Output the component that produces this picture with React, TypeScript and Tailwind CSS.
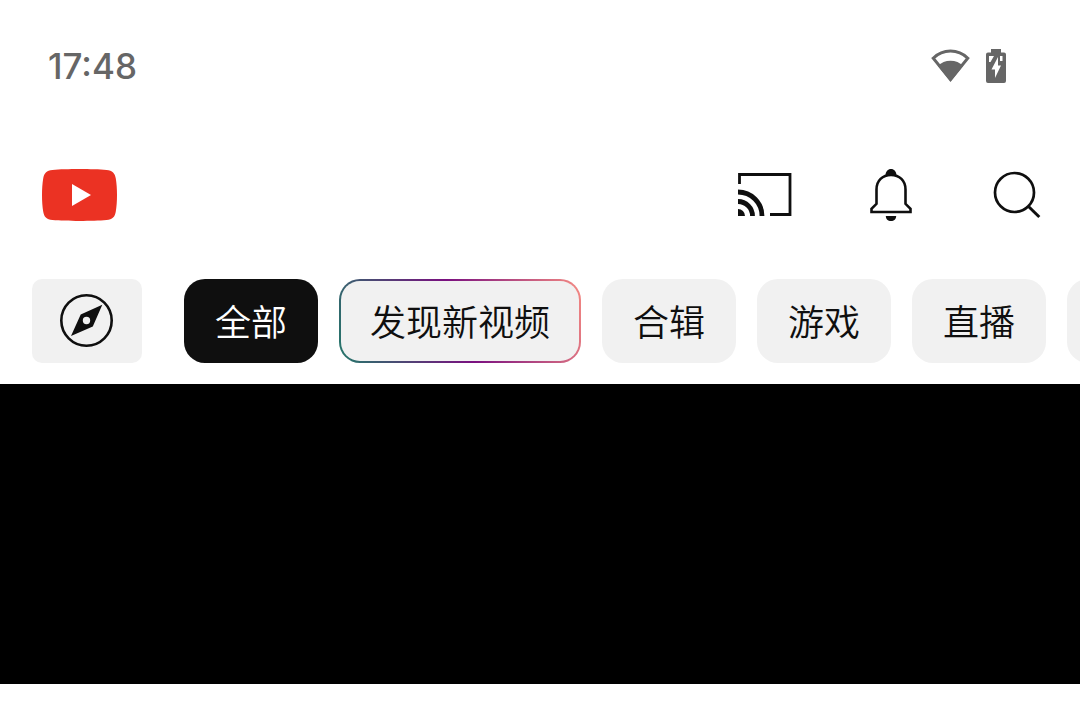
import React, { useState } from "react";

const topics = ["全部", "发现新视频", "合辑", "游戏", "直播"];

function WifiIcon() {
  return (
    <svg className="h-9 w-10" viewBox="0 0 40 36" fill="none" aria-hidden="true">
      <path d="M3.2 10.2C13 0.6 28 0.6 37.8 10.2L20.5 31.5Z" stroke="#666" strokeWidth="3" />
      <path d="M8 18C14 11 27 11 33 18L20.5 33.5Z" fill="#666" />
    </svg>
  );
}

function BatteryIcon() {
  return (
    <svg className="h-9 w-5" viewBox="0 0 20 36" aria-hidden="true">
      <path d="M5 1H15V4.5H18A2 2 0 0 1 20 6.5V33A2 2 0 0 1 18 35H2A2 2 0 0 1 0 33V6.5A2 2 0 0 1 2 4.5H5Z" fill="#666" />
      <path d="M3 8H8L4.5 14H3ZM14 8H16.5V13H14ZM12 9V17.5H15L9 30V21.5H5.5Z" fill="#fff" />
    </svg>
  );
}

function YoutubeLogo() {
  return (
    <svg className="h-[52px] w-[75px]" viewBox="0 0 75 52" aria-hidden="true">
      <path
        d="M10.5 0.9C24 -0.3 51 -0.3 64.5 0.9C70.5 1.5 73 4.2 73.8 9.5C75.4 19 75.4 33 73.8 42.5C73 47.8 70.5 50.5 64.5 51.1C51 52.3 24 52.3 10.5 51.1C4.5 50.5 2 47.8 1.2 42.5C-0.4 33 -0.4 19 1.2 9.5C2 4.2 4.5 1.5 10.5 0.9Z"
        fill="#eb3223"
      />
      <path d="M30 15L49 26L30 37Z" fill="#fff" />
    </svg>
  );
}

function CastIcon() {
  return (
    <svg className="size-14" viewBox="0 0 56 56" fill="none" stroke="#0f0f0f" aria-hidden="true">
      <path d="M2.5 17V7.5H53V47.5H33" strokeWidth="2.8" />
      <path d="M1 25A24 24 0 0 1 25 49M1 34.5A14.5 14.5 0 0 1 15.5 49" strokeWidth="4.8" />
      <path d="M1 42A7 7 0 0 1 8 49H1Z" fill="#0f0f0f" stroke="none" />
    </svg>
  );
}

function BellIcon() {
  return (
    <svg className="size-14" viewBox="0 0 56 56" aria-hidden="true">
      <path
        d="M8.5 45V41.8L13.5 36.8V22.5C13.5 13.5 19.5 8 28 8S42.5 13.5 42.5 22.5V36.8L47.5 41.8V45Z"
        fill="none"
        stroke="#0f0f0f"
        strokeWidth="2.6"
      />
      <path d="M22.5 8.5C22.5 4.5 25 2 28 2S33.5 4.5 33.5 8.5ZM22.8 49H33.2C33.2 52 31 54 28 54S22.8 52 22.8 49Z" fill="#0f0f0f" />
    </svg>
  );
}

function SearchIcon() {
  return (
    <svg className="size-14" viewBox="0 0 56 56" fill="none" stroke="#0f0f0f" aria-hidden="true">
      <circle cx="25.5" cy="25.5" r="19.5" strokeWidth="2.7" />
      <path d="M39 39L50.3 50" strokeWidth="3" />
    </svg>
  );
}

function CompassIcon() {
  return (
    <svg className="size-14" viewBox="0 0 56 56" aria-hidden="true">
      <circle cx="27.5" cy="27.5" r="25.2" fill="none" stroke="#0f0f0f" strokeWidth="2.6" />
      <path
        d="M43.3 11.7L33.8 33.5L12 43L21.7 21.5ZM27.5 23.8A3.7 3.7 0 1 0 27.5 31.2A3.7 3.7 0 1 0 27.5 23.8Z"
        fill="#0f0f0f"
        fillRule="evenodd"
      />
    </svg>
  );
}

function chipStyle(topic: string, selected: boolean) {
  if (selected) return "px-[31px] bg-[#0f0f0f] text-white";
  if (topic === "发现新视频") {
    return "border-2 border-transparent px-[29px] text-[#0f0f0f] [background:linear-gradient(#f1f1f1,#f1f1f1)_padding-box,linear-gradient(71deg,#24786a,#7a1080_50%,#f58a82)_border-box]";
  }
  return "px-[31px] bg-[#f1f1f1] text-[#0f0f0f]";
}

export default function App() {
  const [active, setActive] = useState("全部");

  return (
    <div className="min-h-screen bg-white font-['Inter','Noto_Sans_CJK_SC',sans-serif]">
      <div className="flex h-[132px] items-center justify-between pr-[74px] pl-12 text-[#666]">
        <time className="text-[35px] font-medium">17:48</time>
        <div className="flex items-center gap-4">
          <WifiIcon />
          <BatteryIcon />
        </div>
      </div>

      <header className="flex h-[126px] items-center justify-between pr-[35px] pl-[42px]">
        <a href="#" aria-label="YouTube">
          <YoutubeLogo />
        </a>
        <div className="flex items-center gap-[70px]">
          <button type="button" aria-label="投放"><CastIcon /></button>
          <button type="button" aria-label="通知"><BellIcon /></button>
          <button type="button" aria-label="搜索"><SearchIcon /></button>
        </div>
      </header>

      <nav className="flex gap-[21px] overflow-hidden py-[21px] pl-8">
        <button
          type="button"
          aria-label="探索"
          className="mr-[21px] flex h-[84px] w-[110px] shrink-0 items-center justify-center rounded-[10px] bg-[#f1f1f1]"
        >
          <CompassIcon />
        </button>
        {topics.map((topic) => (
          <button
            key={topic}
            type="button"
            onClick={() => setActive(topic)}
            className={`h-[84px] shrink-0 rounded-[21px] pb-0.5 font-['Noto_Sans_CJK_SC',sans-serif] text-4xl font-[350] ${chipStyle(topic, topic === active)}`}
          >
            {topic}
          </button>
        ))}
        <div className="h-[84px] w-[134px] shrink-0 rounded-[21px] bg-[#f1f1f1]" />
      </nav>

      <main className="h-[300px] bg-black" />
    </div>
  );
}
